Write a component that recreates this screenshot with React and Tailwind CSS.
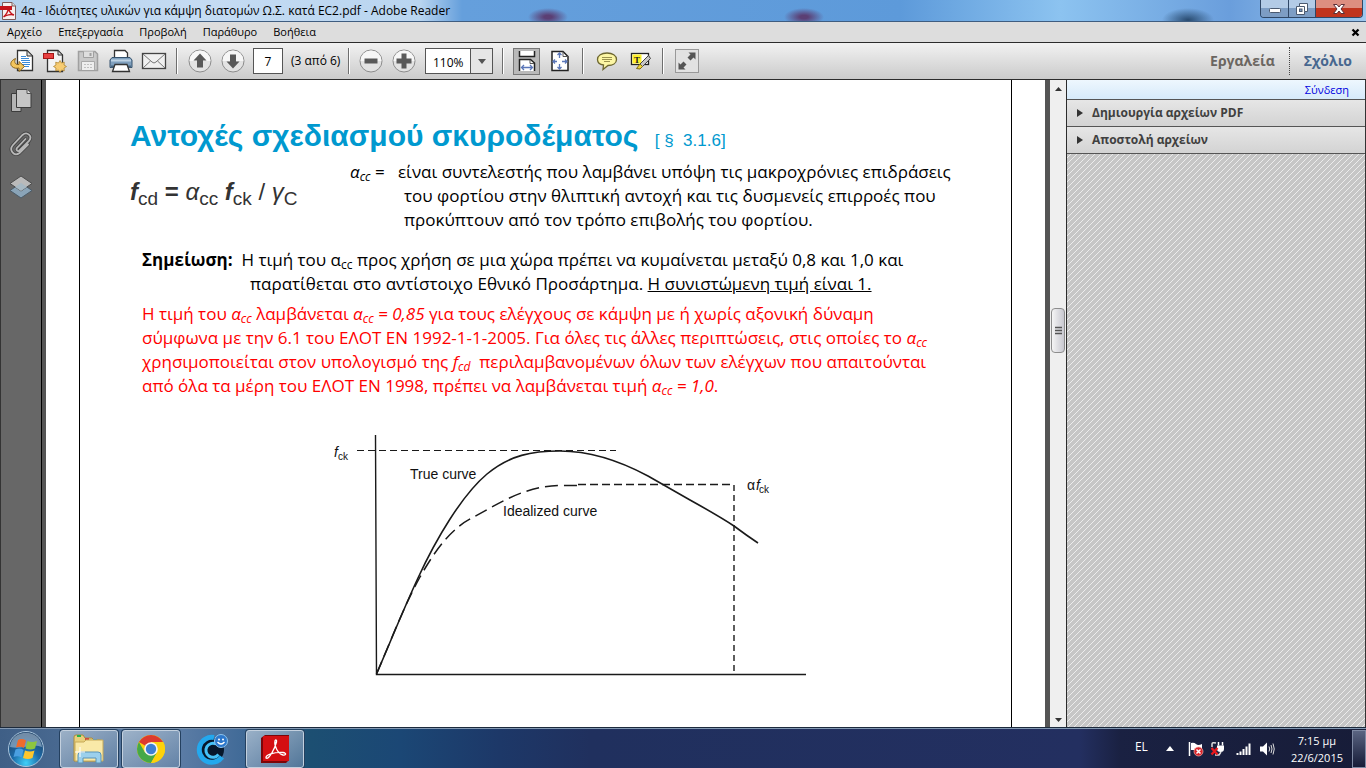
import React from "react";

const ui = "font-['Open_Sans','Noto_Sans',sans-serif]";

function PdfIcon() {
  return (
    <svg width="17" height="18" viewBox="0 0 17 18" aria-hidden="true">
      <path d="M2.500 .5H12L15.500 4V17.500H2.500Z" fill="#f6f0f0" stroke="#7d5a5a" />
      <path d="M12 .5V4H15.500" fill="#ddd" stroke="#7d5a5a" />
      <rect x="0" y="4" width="12" height="4" fill="#c4141c" />
      <path d="M3.500 15C6 13 8 9 8.500 6C9 9 11 12 14 13C11 12 6 13 3.500 15Z" fill="none" stroke="#c4141c" strokeWidth="1.500" />
    </svg>
  );
}

function OpenIcon() {
  return (
    <svg width="26" height="26" viewBox="0 0 26 26" aria-hidden="true">
      <path d="M8.500 2.500H18L23.500 8V22.500H8.500Z" fill="#fff" stroke="#333" strokeWidth="1.300" />
      <path d="M18 2.500V8H23.500Z" fill="#ddd" stroke="#333" />
      <path d="M12 8.500H17M12 10.500H20M12 12.500H21M13 14.500H21M13 16.500H21M14 18.500H20" stroke="#3b8bd8" />
      <path d="M6.500 10.500C2 12.500 .5 16 3 18.500C5 20.500 8 20.500 10 20V23.500L15.500 18.500L10 13.500V16.500C7 17 4.500 15 6.500 10.500Z" fill="#f3c55d" stroke="#8d671c" />
    </svg>
  );
}

function CreateIcon() {
  return (
    <svg width="26" height="26" viewBox="0 0 26 26" aria-hidden="true">
      <path d="M5.500 2.500H16L20.500 7V23.500H5.500Z" fill="#f4f4f4" stroke="#333" strokeWidth="1.300" />
      <path d="M16 2.500V7H20.500Z" fill="#ddd" stroke="#333" />
      <rect x="1.500" y="5.500" width="10" height="5" fill="#e84040" stroke="#a41717" />
      <path d="M18 12.500L19.500 15L22.300 14.200L22 17L24.500 18.500L22 20L22.300 22.800L19.500 22L18 24.500L16.500 22L13.700 22.800L14 20L11.500 18.500L14 17L13.700 14.200L16.500 15Z" fill="#f7cc72" stroke="#b08632" strokeWidth=".8" />
    </svg>
  );
}

function SaveIcon() {
  return (
    <svg width="26" height="26" viewBox="0 0 26 26" aria-hidden="true">
      <path d="M3.500 3.500H20L22.500 6V22.500H3.500Z" fill="#c9c9c9" stroke="#a0a0a0" strokeWidth="1.500" />
      <path d="M8.500 3.500V9.500H18.500V3.500" fill="#dedede" stroke="#a0a0a0" />
      <path d="M15.500 5V8" stroke="#a0a0a0" strokeWidth="2" />
      <path d="M6.500 22V13.500H19.500V22" fill="#eee" stroke="#a9a9a9" />
      <path d="M9 16.500H17M9 19.500H17" stroke="#c0c0c0" strokeDasharray="2 1" />
    </svg>
  );
}

function PrintIcon() {
  return (
    <svg width="26" height="26" viewBox="0 0 26 26" aria-hidden="true">
      <path d="M6.500 11V2.500H17L19.500 5V11" fill="#fff" stroke="#333" strokeWidth="1.300" />
      <path d="M4 9.500H22L24 12V19.500H2V12Z" fill="#7f9fbd" stroke="#36536e" />
      <path d="M3 12.500H23" stroke="#bfd3e4" strokeWidth="2" />
      <path d="M3 18.500H23" stroke="#48657f" strokeWidth="2" />
      <path d="M7 16.500H19L21.500 23.500H4.500Z" fill="#fff" stroke="#333" strokeWidth="1.300" />
    </svg>
  );
}

function MailIcon() {
  return (
    <svg width="26" height="26" viewBox="0 0 26 26" aria-hidden="true">
      <rect x="1.500" y="5.500" width="23" height="15" fill="#f0f0f0" stroke="#444" strokeWidth="1.300" />
      <path d="M2 6L11 14Q13 16 15 14L24 6M2 20L9.500 13M24 20L16.500 13" fill="none" stroke="#777" />
    </svg>
  );
}

function RoundIcon({ d }) {
  return (
    <svg width="26" height="26" viewBox="0 0 26 26" aria-hidden="true">
      <circle cx="13" cy="13" r="11" fill="#e3e3e3" stroke="#8c8c8c" />
      <path d="M2.500 13a10.500 10.500 0 0 1 21 0Z" fill="#f7f7f7" />
      <path d={d} fill="#595959" />
    </svg>
  );
}

function WidthIcon() {
  return (
    <svg width="20" height="22" viewBox="0 0 20 22" aria-hidden="true">
      <path d="M2.500 1V6.500H17.500V1" fill="#fff" stroke="#222" strokeWidth="1.500" />
      <path d="M2.500 21V9.500H13.500L17.500 13V21" fill="#fff" stroke="#222" strokeWidth="1.500" />
      <path d="M13 10V13.500H17" fill="none" stroke="#555" />
      <path d="M5 17.500H15M7 15L4.500 17.500L7 20M13 15L15.500 17.500L13 20" fill="none" stroke="#5a76b8" strokeWidth="1.300" />
    </svg>
  );
}

function FitIcon() {
  return (
    <svg width="20" height="22" viewBox="0 0 20 22" aria-hidden="true">
      <path d="M2 1.500H13L18 6.500V20.500H2Z" fill="#fff" stroke="#222" strokeWidth="1.500" />
      <path d="M13 1.500V6.500H18" fill="none" stroke="#555" />
      <path d="M9.500 3V8M9.500 14V19M3 11.500H7M12 11.500H17M7.500 5L9.500 3L11.500 5M7.500 17L9.500 19L11.500 17M5 9.500L3 11.500L5 13.500M15 9.500L17 11.500L15 13.500" fill="none" stroke="#5a76b8" strokeWidth="1.300" />
    </svg>
  );
}

function CommentIcon() {
  return (
    <svg width="24" height="22" viewBox="0 0 24 22" aria-hidden="true">
      <path d="M12 3C17.500 3 21.500 5.500 21.500 9.500C21.500 13.500 17.500 15.500 13 15.500L8 19.500L8.500 15C5 14.500 2.500 12.500 2.500 9.500C2.500 5.500 6.500 3 12 3Z" fill="#fcf6a4" stroke="#6d6730" strokeWidth="1.300" />
      <path d="M7 7.500H17M7 9.500H17M9 11.500H15" stroke="#9b934e" />
    </svg>
  );
}

function HighlightIcon() {
  return (
    <svg width="24" height="22" viewBox="0 0 24 22" aria-hidden="true">
      <rect x="3.500" y="3.500" width="17" height="11" fill="#fff" stroke="#222" strokeWidth="1.300" />
      <rect x="4.500" y="4.500" width="9" height="9" fill="#fff02b" />
      <text x="6" y="12.500" fontSize="9" fontWeight="700" className="font-['Liberation_Serif',serif]" fill="#222">T</text>
      <path d="M20.500 5.500L22.500 8.500L14.500 16.500L12 14Z" fill="#c7c7c7" stroke="#444" />
      <path d="M12 14L14.500 16.500L12 19L8.500 18.500Z" fill="#f0d638" stroke="#7f6a13" />
    </svg>
  );
}

function ExpandIcon() {
  return (
    <svg width="24" height="24" viewBox="0 0 24 24" aria-hidden="true">
      <rect x=".5" y=".5" width="23" height="23" fill="#e2e2e2" stroke="#999" />
      <path d="M13.500 3.500H20.500V10.500L18.500 8.500L15.500 11.500L12.500 8.500L15.500 5.500ZM3.500 13.500L5.500 15.500L8.500 12.500L11.500 15.500L8.500 18.500L10.500 20.500H3.500Z" fill="#555" />
    </svg>
  );
}

function Sep() {
  return <span className="h-[26px] w-0.5 shrink-0 border-l border-[#6e6e6e] bg-white" />;
}

function Tool({ label, children }) {
  return (
    <button aria-label={label} className="flex h-8 w-[33px] shrink-0 items-center justify-center">
      {children}
    </button>
  );
}

function TitleBar() {
  return (
    <header className="flex h-[21px] shrink-0 items-start justify-between bg-[radial-gradient(ellipse_20px_9px_at_548px_17px,#5b3f74_20%,transparent_100%),radial-gradient(ellipse_20px_9px_at_804px_17px,#5b3f74_20%,transparent_100%),radial-gradient(ellipse_26px_12px_at_1188px_20px,#294b70_0%,transparent_100%),linear-gradient(90deg,#b4d0ec_0px,#c5dcf3_200px,#b9d5f0_420px,#659fdc_462px,#5d9ada_900px,#8cc3f0_1060px,#6a9edc_1230px,#9ec8ee_1366px)]">
      <div className="flex h-[21px] items-center gap-1">
        <PdfIcon />
        <h1 className="whitespace-nowrap text-[12px] leading-4 text-black">4α - Ιδιότητες υλικών για κάμψη διατομών Ω.Σ. κατά EC2.pdf - Adobe Reader</h1>
      </div>
      <div className="mr-[3px] flex h-[18px] overflow-hidden rounded-b border border-t-0 border-[#2f4766]">
        <button aria-label="Minimize" className="flex w-7 items-center justify-center border-r border-[#2f4766] bg-linear-to-b from-[#b3cbe6] from-50% to-[#7d9dc4] to-50%">
          <svg width="14" height="14" viewBox="0 0 14 14"><rect x="1.500" y="6.500" width="11" height="4" rx="1" fill="#fff" stroke="#4b5a70" /></svg>
        </button>
        <button aria-label="Restore" className="flex w-[27px] items-center justify-center border-r border-[#2f4766] bg-linear-to-b from-[#b3cbe6] from-50% to-[#7d9dc4] to-50%">
          <svg width="14" height="14" viewBox="0 0 14 14"><path d="M4.500 1.500H12.500V9.500H9.500V12.500H1.500V4.500H4.500Z" fill="#fff" stroke="#4b5a70" /><path d="M4.500 4.500H9.500V9.500" fill="none" stroke="#4b5a70" /><rect x="4.500" y="7" width="2.500" height="2.500" fill="#7d9dc4" stroke="#4b5a70" /></svg>
        </button>
        <button aria-label="Close" className="flex w-[46px] items-center justify-center bg-linear-to-b from-[#dd8e80] from-45% to-[#c0341e] to-50%">
          <svg width="14" height="14" viewBox="0 0 14 14"><path d="M1.500 2.500H5L7 5L9 2.500H12.500L9 7L12.500 11.500H9L7 9L5 11.500H1.500L5 7Z" fill="#fff" stroke="#5c3038" /></svg>
        </button>
      </div>
    </header>
  );
}

function MenuBar() {
  return (
    <nav className="flex h-[22px] shrink-0 items-center border-y border-t-[#3f5d80] border-b-[#2c2c2c] bg-[#dddddd] pl-[7px] text-[11px] leading-4 text-black">
      <div className="flex grow gap-4">
        <button>Αρχείο</button>
        <button>Επεξεργασία</button>
        <button>Προβολή</button>
        <button>Παράθυρο</button>
        <button>Βοήθεια</button>
      </div>
      <button aria-label="Close document" className="px-[6px]">
        <svg width="9" height="9" viewBox="0 0 9 9"><path d="M1.500 1.500L7.500 7.500M7.500 1.500L1.500 7.500" stroke="#000" strokeWidth="2.300" /></svg>
      </button>
    </nav>
  );
}

function ToolBar() {
  return (
    <div className="flex h-[37px] shrink-0 items-center border-b border-[#2c2c2c] bg-linear-to-b from-[#f2f2f2] to-[#cbcbcb] pl-[5px]">
      <Tool label="Open"><OpenIcon /></Tool>
      <Tool label="Create PDF"><CreateIcon /></Tool>
      <Tool label="Save"><SaveIcon /></Tool>
      <Tool label="Print"><PrintIcon /></Tool>
      <Tool label="Email"><MailIcon /></Tool>
      <div className="flex w-[13px] justify-center"><Sep /></div>
      <Tool label="Previous page"><RoundIcon d="M13 5.500L19.500 12.500H16V19.500H10V12.500H6.500Z" /></Tool>
      <Tool label="Next page"><RoundIcon d="M13 20.500L19.500 13.500H16V6.500H10V13.500H6.500Z" /></Tool>
      <input aria-label="Page" defaultValue="7" className="ml-1 h-[26px] w-[30px] border border-[#555] bg-white text-center text-[12px] text-black" />
      <span className="w-[65px] whitespace-nowrap pl-2 text-[12px] text-black">(3 από 6)</span>
      <Sep />
      <div className="ml-1 flex">
        <Tool label="Zoom out"><RoundIcon d="M6.500 10.500H19.500V15.500H6.500Z" /></Tool>
        <Tool label="Zoom in"><RoundIcon d="M10.500 5.500H15.500V10.500H20.500V15.500H15.500V20.500H10.500V15.500H5.500V10.500H10.500Z" /></Tool>
      </div>
      <div className="relative ml-[5px] mr-[9px] h-[26px] w-[68px] border border-[#555] bg-white">
        <select aria-label="Zoom" className="h-full w-full appearance-none pl-[7px] text-[12px] leading-4 text-black">
          <option>110%</option>
        </select>
        <span className="pointer-events-none absolute inset-y-0 right-0 flex w-[22px] items-center justify-center border-l border-[#555] bg-[#e6e6e6]">
          <svg width="8" height="5" viewBox="0 0 8 5"><path d="M0 0H8L4 5Z" fill="#555" /></svg>
        </span>
      </div>
      <Sep />
      <button aria-label="Fit width" className="ml-[9px] flex h-[27px] w-[27px] items-center justify-center border border-[#777] bg-[#b9b9b9]"><WidthIcon /></button>
      <button aria-label="Fit page" className="ml-[9px] mr-[11px] flex h-[27px] w-[22px] items-center justify-center"><FitIcon /></button>
      <Sep />
      <div className="ml-[6px] mr-[6px] flex">
        <Tool label="Comment"><CommentIcon /></Tool>
        <Tool label="Highlight"><HighlightIcon /></Tool>
      </div>
      <Sep />
      <button aria-label="Full screen" className="ml-[11px]"><ExpandIcon /></button>
      <div className="ml-auto flex items-center text-[14px] font-bold leading-7">
        <button className="px-[14px] text-[#6b6661]">Εργαλεία</button>
        <button className="border-l border-dotted border-[#444] px-[14px] text-[#47678f]">Σχόλιο</button>
      </div>
    </div>
  );
}

function NavPane() {
  return (
    <aside className="flex w-[46px] shrink-0 border-r-4 border-[#555555] bg-[#676767]">
      <div className="flex grow flex-col items-center gap-[17px] border-x border-l-[#333] border-r-black pt-2">
        <button aria-label="Pages">
          <svg width="24" height="26" viewBox="0 0 24 26"><path d="M2.500 5.500H12V23.500H2.500Z" fill="#b5b5b5" stroke="#3c3c3c" /><path d="M7.500 1.500H18L22 5.500V19.500H7.500Z" fill="#c6c6c6" stroke="#3c3c3c" /><path d="M18 1.500V5.500H22" fill="#ddd" stroke="#555" /></svg>
        </button>
        <button aria-label="Attachments">
          <svg width="24" height="26" viewBox="0 0 24 26"><g fill="none" strokeLinecap="round"><path d="M16.500 8L8 17C6.500 19 9 21 10.500 19.500L20 10C24 5 18 0 13.500 4L4 14C-.5 19 5 26 10.500 22L19 13.500" stroke="#444" strokeWidth="3.500" /><path d="M16.500 8L8 17C6.500 19 9 21 10.500 19.500L20 10C24 5 18 0 13.500 4L4 14C-.5 19 5 26 10.500 22L19 13.500" stroke="#b8b8b8" strokeWidth="1.800" /></g></svg>
        </button>
        <button aria-label="Layers">
          <svg width="24" height="26" viewBox="0 0 24 26"><path d="M12 9L23 16.500L12 24L1 16.500Z" fill="#8aa4b8" stroke="#4b5c69" /><path d="M12 2L23 9.500L12 17L1 9.500Z" fill="#c9c9c9" fillOpacity=".85" stroke="#4c4c4c" /><path d="M12 9L18 13L12 17L6 13Z" fill="#a7b9c4" /></svg>
        </button>
      </div>
    </aside>
  );
}

const Sub = ({ children }) => <sub className="text-[12px]">{children}</sub>;

function Chart() {
  return (
    <svg width="490" height="260" viewBox="330 430 490 260" className="block font-['Liberation_Sans',sans-serif]" role="img" aria-label="True curve and idealized curve">
      <g fill="none" stroke="#1a1a1a" strokeWidth="1.400">
        <path d="M375.500 435L376.500 674.500H806" />
        <path d="M357 450.500H616" strokeDasharray="7 4" strokeWidth="1.100" />
        <path d="M376.500 674C392 638 404 608 418 578C436 539 462 495 487 474C510 455 532 451 560 451C592 451 620 461 648 476C664 485 676 492 690 500C708 510 722 518 734 526Q746 535 758 543" strokeWidth="1.600" />
        <path d="M376.500 674C392 638 404 606 420 577C438 545 454 527 472 518C498 504 524 486 560 485.500H580" strokeDasharray="13 6" strokeWidth="1.500" />
        <path d="M578 484.500H734" strokeDasharray="8 4" />
        <path d="M734 485V674" strokeDasharray="6 4" />
      </g>
      <g fill="#111" fontSize="14">
        <text x="410" y="479">True curve</text>
        <text x="503" y="516">Idealized curve</text>
        <text x="334" y="457" fontStyle="italic">f</text>
        <text x="338" y="460" fontSize="10">ck</text>
        <text x="747" y="490">α</text>
        <text x="756" y="490" fontStyle="italic">f</text>
        <text x="759" y="493" fontSize="10">ck</text>
      </g>
    </svg>
  );
}

function Page() {
  return (
    <main className="min-w-0 grow overflow-hidden bg-white px-[33px]">
      <article className="h-full border-x border-black pl-[50px] pt-[38px] font-['Open_Sans','Noto_Sans',sans-serif] text-[17px] leading-6 text-black">
        <h2 className="whitespace-nowrap font-['Liberation_Sans',sans-serif] text-[30px] font-bold leading-9 text-[#0099cf]">
          Αντοχές σχεδιασμού σκυροδέματος <span className="ml-2 text-[17px] font-normal">[ §&nbsp; 3.1.6]</span>
        </h2>
        <div className="flex whitespace-nowrap pt-px">
          <p className="w-[220px] shrink-0 pt-5 font-['Liberation_Sans',sans-serif] text-[24px] text-[#333]">
            <i className="font-bold">f</i><sub className="text-[19px]">cd</sub> <b>=</b> <i>α</i><sub className="text-[19px]">cc</sub> <i className="font-bold">f</i><sub className="text-[19px]">ck</sub> / <i>γ</i><sub className="text-[19px]">C</sub>
          </p>
          <p className="w-12 shrink-0"><i>α<Sub>cc</Sub></i> =</p>
          <p>
            είναι συντελεστής που λαμβάνει υπόψη τις μακροχρόνιες επιδράσεις
            <span className="block pl-[6px]">του φορτίου στην θλιπτική αντοχή και τις δυσμενείς επιρροές που</span>
            <span className="block pl-[6px]">προκύπτουν από τον τρόπο επιβολής του φορτίου.</span>
          </p>
        </div>
        <p className="whitespace-nowrap pl-3 pt-4">
          <b>Σημείωση:</b>&nbsp; Η τιμή του α<Sub>cc</Sub> προς χρήση σε μια χώρα πρέπει να κυμαίνεται μεταξύ 0,8 και 1,0 και
          <span className="block pl-[108px]">παρατίθεται στο αντίστοιχο Εθνικό Προσάρτημα. <u>Η συνιστώμενη τιμή είναι 1.</u></span>
        </p>
        <p className="whitespace-nowrap pl-3 pt-[6px] text-[#ff0000]">
          Η τιμή του <i>α<Sub>cc</Sub></i> λαμβάνεται <i>α<Sub>cc</Sub> = 0,85</i> για τους ελέγχους σε κάμψη με ή χωρίς αξονική δύναμη<br />
          σύμφωνα με την 6.1 του ΕΛΟΤ ΕΝ 1992-1-1-2005. Για όλες τις άλλες περιπτώσεις, στις οποίες το <i>α<Sub>cc</Sub></i><br />
          χρησιμοποιείται στον υπολογισμό της <i>f<Sub>cd</Sub></i>&nbsp; περιλαμβανομένων όλων των ελέγχων που απαιτούνται<br />
          από όλα τα μέρη του ΕΛΟΤ ΕΝ 1998, πρέπει να λαμβάνεται τιμή <i>α<Sub>cc</Sub> = 1,0</i>.
        </p>
        <div className="pl-[200px] pt-8"><Chart /></div>
      </article>
    </main>
  );
}

function ScrollBar() {
  return (
    <div className="flex w-[22px] shrink-0 flex-col items-center border-l-[5px] border-r border-l-[#555555] border-r-[#2c2c2c] bg-[#efefef]">
      <button aria-label="Scroll up" className="flex h-[17px] items-center"><svg width="7" height="4" viewBox="0 0 7 4"><path d="M0 4L3.500 0L7 4Z" fill="#333" /></svg></button>
      <div className="flex w-full grow flex-col">
        <div className="grow-[211]" />
        <div className="mx-px flex h-[45px] shrink-0 items-center justify-center rounded-sm border border-[#8d8d8d] bg-linear-to-r from-[#f5f5f5] to-[#c8c8d0]">
          <svg width="7" height="9" viewBox="0 0 7 9"><path d="M0 1.500H7M0 4.500H7M0 7.500H7" stroke="#555" strokeWidth="1.500" /></svg>
        </div>
        <div className="grow-[358]" />
      </div>
      <button aria-label="Scroll down" className="flex h-[17px] items-center"><svg width="7" height="4" viewBox="0 0 7 4"><path d="M0 0L3.500 4L7 0Z" fill="#333" /></svg></button>
    </div>
  );
}

function PanelRow({ children }) {
  return (
    <button className="flex h-[27px] w-full items-center gap-[9px] border-b border-[#555] bg-linear-to-b from-[#e6e6e6] to-[#d3d3d3] pl-[10px] text-[12px] font-bold text-[#404040]">
      <svg width="6" height="8" viewBox="0 0 6 8"><path d="M0 0L6 4L0 8Z" fill="#333" /></svg>
      {children}
    </button>
  );
}

function SidePanel() {
  return (
    <aside className="w-[299px] shrink-0 border-r border-[#333] bg-[#c6c6c6] bg-[linear-gradient(135deg,#ececec_0%,#ececec_8%,#c6c6c6_8%,#c6c6c6_42%,#ececec_42%,#ececec_58%,#c6c6c6_58%,#c6c6c6_92%,#ececec_92%)] bg-[length:6px_6px]">
      <div className="flex h-5 items-center justify-end border-b border-[#555] bg-linear-to-b from-[#eef7fe] to-[#d6eafa] pr-4 text-[11px] leading-4">
        <a href="#signin" className="text-[#0000e0]">Σύνδεση</a>
      </div>
      <PanelRow>Δημιουργία αρχείων PDF</PanelRow>
      <PanelRow>Αποστολή αρχείων</PanelRow>
    </aside>
  );
}

function TaskButton({ label, plain, children }) {
  return (
    <button
      aria-label={label}
      className={
        "flex h-[38px] w-[58px] items-center justify-center " +
        (plain ? "" : "rounded-[3px] border border-[#c3d0de] bg-linear-to-br from-[#b0c2d4]/80 to-[#6886a8]/70 shadow-[0_0_0_1px_#24405f]")
      }
    >
      {children}
    </button>
  );
}

function TaskBar() {
  return (
    <footer className="flex h-10 shrink-0 items-center justify-between border-t border-[#8399b3] bg-[linear-gradient(90deg,#3f5f86_0px,#5b7ca5_180px,#426b98_240px,#1c4f72_310px,#1b4775_400px,#1d3868_500px,#20305e_590px,#232f60_1080px,#1a2142_1120px,#171c38_1366px)] shadow-[0_-1px_0_#1c2a3c]">
      <div className="flex items-center gap-1">
        <button aria-label="Start" className="flex h-[38px] w-14 items-center justify-center pr-1">
          <svg width="38" height="38" viewBox="0 0 38 38">
            <defs>
              <radialGradient id="orb" cx=".5" cy=".9" r=".8"><stop offset="0" stopColor="#3fd0f8" /><stop offset=".5" stopColor="#1b6aa8" /><stop offset="1" stopColor="#24476d" /></radialGradient>
            </defs>
            <circle cx="19" cy="19" r="17.500" fill="url(#orb)" stroke="#a9c5dc" />
            <path d="M3 17C5 -2 33 -2 35 17C25 13 14 20 3 17Z" fill="#d3e3ef" fillOpacity=".45" />
            <path d="M11 10Q15 8 19 10.500L17 18Q13.500 16 9 17.500Z" fill="#ef6b2c" />
            <path d="M20.500 11Q25 13 30 11L28 18.500Q23.500 20.500 18.500 18.500Z" fill="#8dc63f" />
            <path d="M8.500 19.500Q13 17.500 16.500 20L14.500 27.500Q11 25.500 6.500 27Z" fill="#4a9fe0" />
            <path d="M18 20.500Q23 22.500 27.500 20.500L25.500 28Q21 30 16 28Z" fill="#fdc62c" />
          </svg>
        </button>
        <TaskButton label="File Explorer">
          <svg width="34" height="32" viewBox="0 0 34 32">
            <path d="M2 4Q2 2 4 2H11L13 5H20L22 7H28Q30 7 30 9V28H2Z" fill="#e8cf7c" stroke="#a98c3d" />
            <rect x="5" y="2" width="4" height="2" fill="#26b14c" /><rect x="13" y="5" width="4" height="2" fill="#d14a3a" /><rect x="21" y="6" width="4" height="2" fill="#3295dd" />
            <path d="M3 9H12L14 7H31V28H3Z" fill="#f9e9a8" stroke="#c7aa58" />
            <path d="M6 30V22Q6 19 9 19H26Q29 19 29 22V30H24V25H11V30Z" fill="#9bd0ec" stroke="#5893b8" />
            <path d="M8 14V24M3 19H13" stroke="#fff" />
          </svg>
        </TaskButton>
        <TaskButton label="Google Chrome">
          <svg width="30" height="30" viewBox="0 0 30 30">
            <circle cx="15" cy="15" r="14" fill="#fdd20b" />
            <path d="M15 15L2.900 8A14 14 0 0 1 27.100 8Z" fill="#dd3b2e" />
            <path d="M2.900 8A14 14 0 0 0 15 29L21 18.500L15 15L9 18.500Z" fill="#45a848" />
            <path d="M15 15L21 18.500L15 29A14 14 0 0 0 27.100 8H15Z" fill="#fdd20b" />
            <circle cx="15" cy="15" r="6.800" fill="#f4f4f4" /><circle cx="15" cy="15" r="5.200" fill="#3d7fd4" />
          </svg>
        </TaskButton>
        <TaskButton label="CyberLink" plain>
          <svg width="34" height="32" viewBox="0 0 34 32">
            <circle cx="16" cy="17" r="12" fill="#07172b" />
            <path d="M26 24A12.500 12.500 0 1 1 18 4.500" fill="none" stroke="#23a8ee" strokeWidth="5" />
            <path d="M22.500 21.500A7 7 0 1 1 20 11" fill="none" stroke="#46c1f7" strokeWidth="3" />
            <circle cx="25" cy="8" r="6.500" fill="#2c77cb" stroke="#8ec5ee" />
            <circle cx="23" cy="6.500" r="1" fill="#fff" /><circle cx="27" cy="6.500" r="1" fill="#fff" />
            <path d="M21.500 9Q25 13 28.500 9" fill="none" stroke="#fff" strokeWidth="1.300" />
          </svg>
        </TaskButton>
        <TaskButton label="Adobe Reader">
          <svg width="30" height="28" viewBox="0 0 30 28">
            <path d="M1 3L5 0H29V25L26 28H1Z" fill="#7d0508" /><rect x="3" y="1" width="26" height="25" fill="#d40f12" />
            <path d="M6 23C5 20 14 17 23 17.500C27 18 26 20.500 23 20C18 19 14 11 15 6C15.500 4 17 5 16.500 7C15 13 9 25 6 23Z" fill="none" stroke="#fff" strokeWidth="1.300" />
          </svg>
        </TaskButton>
      </div>
      <div className="flex h-full items-center text-[12px] text-white">
        <span className="mr-[18px] pb-1">EL</span>
        <svg className="mr-[14px]" width="8" height="5" viewBox="0 0 8 5"><path d="M0 5L4 0L8 5Z" fill="#fff" /></svg>
        <svg className="mr-[6px]" width="16" height="16" viewBox="0 0 16 16"><path d="M1.500 1V15" stroke="#fff" strokeWidth="1.500" /><path d="M3 2Q6 1 8 3T14 3V9H3Z" fill="#fff" /><circle cx="10.500" cy="10.500" r="4.500" fill="#d8242a" stroke="#f2b2a9" strokeWidth=".7" /><path d="M8.500 8.500L12.500 12.500M12.500 8.500L8.500 12.500" stroke="#fff" strokeWidth="1.500" /></svg>
        <svg className="mr-[10px]" width="16" height="16" viewBox="0 0 16 16"><path d="M2 6V3Q2 1 6 2M5 14H9L11 11" stroke="#ddd" fill="none" strokeWidth="1.500" /><path d="M7 4.500H14V8Q14 11 10.500 11Q7 11 7 8Z" fill="#fff" /><path d="M8.500 1V4.500M12.500 1V4.500" stroke="#fff" strokeWidth="1.500" /><path d="M1.500 7L7.500 13.500M7.500 7L1.500 13.500" stroke="#e8191d" strokeWidth="2.300" /></svg>
        <svg className="mr-[9px]" width="15" height="14" viewBox="0 0 15 14"><path d="M1.500 13V11M4.500 13V9.500M7.500 13V7M10.500 13V4.500M13.500 13V1.500" stroke="#fff" strokeWidth="2" /></svg>
        <svg className="mr-4" width="15" height="16" viewBox="0 0 15 16"><path d="M0 5.500H3L7 1.500V14.500L3 10.500H0Z" fill="#fff" /><path d="M9 5.500Q10.500 8 9 10.500M11 4Q13 8 11 12M13 2.500Q15.500 8 13 13.500" stroke="#ddd" fill="none" /></svg>
        <time className="mr-[9px] text-center text-[11px] leading-[17px]">7:15 μμ<br />22/6/2015</time>
        <button aria-label="Show desktop" className="h-[38px] w-[14px] border border-[#7e89a3] bg-linear-to-b from-[#5b6582] to-[#171c38]" />
      </div>
    </footer>
  );
}

export default function App() {
  return (
    <div className={"flex h-screen flex-col overflow-hidden " + ui}>
      <TitleBar />
      <MenuBar />
      <ToolBar />
      <div className="flex min-h-0 grow">
        <NavPane />
        <Page />
        <ScrollBar />
        <SidePanel />
      </div>
      <TaskBar />
    </div>
  );
}
